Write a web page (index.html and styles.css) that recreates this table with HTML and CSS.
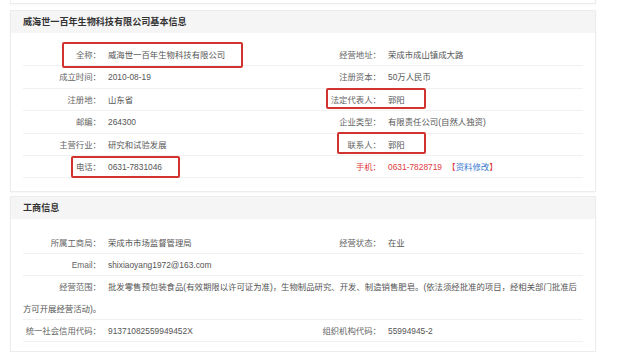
FILE: index.html
```html
<!DOCTYPE html>
<html lang="zh-CN">
<head>
<meta charset="utf-8">
<link rel="stylesheet" href="styles.css">
</head>
<body>
<div class="page">
  <div class="stub"></div>

  <section class="card card-basic">
    <div class="card-head">威海世一百年生物科技有限公司基本信息</div>
    <div class="card-body">
      <div class="row">
        <span class="lbl">全称：</span><span class="val">威海世一百年生物科技有限公司</span>
        <span class="lbl">经营地址：</span><span class="val">荣成市成山镇成大路</span>
      </div>
      <div class="row">
        <span class="lbl">成立时间：</span><span class="val">2010-08-19</span>
        <span class="lbl">注册资本：</span><span class="val">50万人民币</span>
      </div>
      <div class="row">
        <span class="lbl">注册地：</span><span class="val">山东省</span>
        <span class="lbl">法定代表人：</span><span class="val">郭阳</span>
      </div>
      <div class="row">
        <span class="lbl">邮编：</span><span class="val">264300</span>
        <span class="lbl">企业类型：</span><span class="val">有限责任公司(自然人独资)</span>
      </div>
      <div class="row">
        <span class="lbl">主营行业：</span><span class="val">研究和试验发展</span>
        <span class="lbl">联系人：</span><span class="val">郭阳</span>
      </div>
      <div class="row">
        <span class="lbl">电话：</span><span class="val">0631-7831046</span>
        <span class="lbl red">手机：</span><span class="val red">0631-7828719 <span class="edit">【<span class="link">资料修改</span>】</span></span>
      </div>
    </div>
  </section>

  <section class="card card-biz">
    <div class="card-head">工商信息</div>
    <div class="card-body">
      <div class="row">
        <span class="lbl">所属工商局：</span><span class="val">荣成市市场监督管理局</span>
        <span class="lbl">经营状态：</span><span class="val">在业</span>
      </div>
      <div class="row">
        <span class="lbl">Email：</span><span class="val">shixiaoyang1972@163.com</span>
        <span class="lbl"></span><span class="val"></span>
      </div>
      <div class="row row-full">
        <span class="line-1"><span class="lbl">经营范围：</span>批发零售预包装食品(有效期限以许可证为准)，生物制品研究、开发、制造销售肥皂。(依法须经批准的项目，经相关部门批准后</span><br>方可开展经营活动)。
      </div>
      <div class="row">
        <span class="lbl">统一社会信用代码：</span><span class="val">91371082559949452X</span>
        <span class="lbl">组织机构代码：</span><span class="val">55994945-2</span>
      </div>
    </div>
  </section>

  <div class="mark mark-1"></div>
  <div class="mark mark-2"></div>
  <div class="mark mark-3"></div>
  <div class="mark mark-4"></div>
</div>
</body>
</html>
```

FILE: styles.css
```css
html, body {
  margin: 0;
  padding: 0;
  background: #ffffff;
}

body {
  font-family: "Liberation Sans", "Noto Sans CJK SC", sans-serif;
  font-size: 8.4px;
  color: #555;
}

.page {
  position: relative;
  width: 586px;
  margin-left: 10px;
}

.stub {
  height: 3px;
  border: 1px solid #ececec;
  border-top: none;
  box-shadow: 0 1px 2px rgba(0,0,0,0.03);
}

.card {
  margin-top: 6px;
  border: 1px solid #ececec;
  box-shadow: 0 1px 2px rgba(0,0,0,0.04);
  background: #fff;
}

.card-head {
  height: 22px;
  line-height: 22px;
  padding-left: 12px;
  background: #f5f5f5;
  font-size: 9.1px;
  font-weight: bold;
  color: #333;
}

.card-body {
  padding: 11px 12px 13px 12px;
}

.card-biz {
  margin-top: 4px;
}

.card-biz .card-body {
  padding-top: 13px;
  padding-bottom: 9px;
}

.row {
  display: grid;
  grid-template-columns: 78px 202px 78px 1fr;
  height: 22.4px;
  line-height: 22px;
  border-bottom: 1px solid #f1f1f1;
  box-sizing: border-box;
  white-space: nowrap;
}

.card-biz .row {
  height: 22px;
}

.lbl {
  text-align: right;
  color: #666;
}

.val {
  padding-left: 7px;
  color: #555;
}

.red {
  color: #e0393e;
}

.edit {
  color: #e0393e;
  margin-left: 3px;
}

.link {
  color: #3d7bd0;
}

.card-biz .row.row-full {
  display: block;
  height: 44px;
  color: #555;
}

.line-1 {
  white-space: nowrap;
}

.row-full .lbl {
  display: inline-block;
  width: 78px;
  margin-right: 7px;
}

.mark {
  position: absolute;
  border: 2px solid #d1342f;
  border-radius: 2px;
  box-sizing: border-box;
}

.mark-1 { left: 52px;  top: 42px;  width: 181px; height: 26px; }
.mark-2 { left: 316px; top: 88px;  width: 100px; height: 21px; }
.mark-3 { left: 327px; top: 132px; width: 89px;  height: 22px; }
.mark-4 { left: 61px;  top: 156px; width: 109px; height: 22px; }
```
